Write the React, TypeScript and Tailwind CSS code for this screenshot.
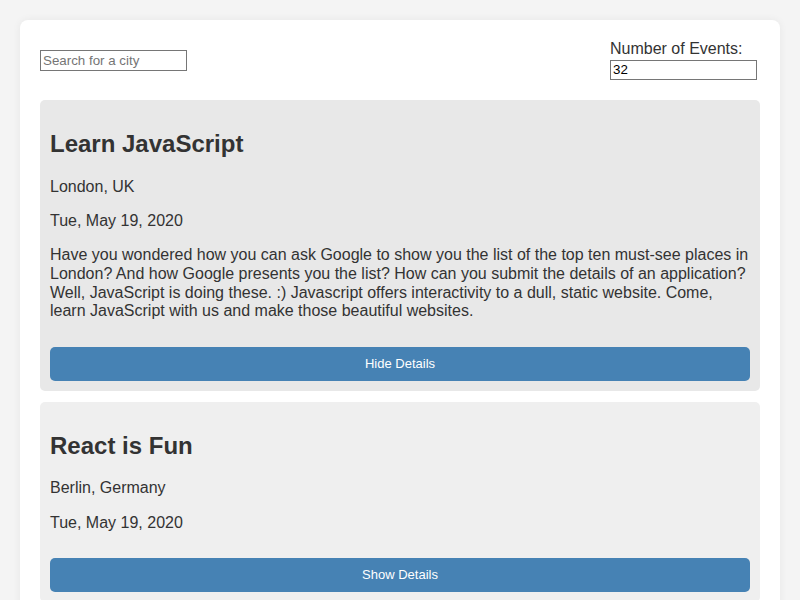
import { useState } from "react";

type Ev = {
  id: string;
  title: string;
  location: string;
  date: string;
  description: string;
};

const events: Ev[] = [
  {
    id: "1",
    title: "Learn JavaScript",
    location: "London, UK",
    date: "Tue, May 19, 2020",
    description:
      "Have you wondered how you can ask Google to show you the list of the top ten must-see places in London? And how Google presents you the list? How can you submit the details of an application? Well, JavaScript is doing these. :) Javascript offers interactivity to a dull, static website. Come, learn JavaScript with us and make those beautiful websites.",
  },
  {
    id: "2",
    title: "React is Fun",
    location: "Berlin, Germany",
    date: "Tue, May 19, 2020",
    description:
      "Love HTML, CSS, and JS? Want to become a cool front-end developer? React is one of the most popular front-end frameworks.",
  },
];

function EventItem({ event, open, active }: { event: Ev; open: boolean; active?: boolean }) {
  const [show, setShow] = useState(open);
  return (
    <div
      className={`rounded-[5px] p-[10px] ${active ? "bg-[#e8e8e8]" : "bg-[#efefef]"}`}
    >
      <h2 className="mt-[20px] mb-[20px] text-[24px] font-bold leading-[27.6px]">{event.title}</h2>
      <p className="mt-4 leading-[18.4px]">{event.location}</p>
      <p className="mt-4 leading-[18.4px]">{event.date}</p>
      {show && <p className="mt-4 leading-[18.6px]">{event.description}</p>}
      <button
        onClick={() => setShow(!show)}
        className="block w-full h-[34px] mt-[26px] rounded-[5px] bg-[#4682b4] text-white text-[13px]"
      >
        {show ? "Hide Details" : "Show Details"}
      </button>
    </div>
  );
}

export default function App() {
  return (
    <div
      className="min-h-screen bg-[#f4f4f4] p-[20px] text-[#333] text-[16px]"
      style={{ fontFamily: '"Liberation Sans", Arial, sans-serif' }}
    >
      <div className="rounded-[8px] bg-white p-[20px] shadow-[0_0_8px_rgba(0,0,0,0.06)]">
        <div className="flex items-center justify-between h-[40px] mb-[20px]">
          <input
            type="text"
            placeholder="Search for a city"
            className="w-[147px] h-[21px] border border-[#767676] px-[2px] text-[13.33px] text-black placeholder:text-[#757575] outline-none"
          />
          <div className="mr-[3px] flex flex-col">
            <label className="leading-[18.4px] mb-[1px]">Number of Events:</label>
            <input
              type="number"
              defaultValue={32}
              className="w-[147px] h-[20px] border border-[#767676] px-[2px] text-[13.33px] text-black outline-none"
            />
          </div>
        </div>
        <div className="flex flex-col gap-[11px]">
          <EventItem event={events[0]} open active />
          <EventItem event={events[1]} open={false} />
        </div>
      </div>
    </div>
  );
}
